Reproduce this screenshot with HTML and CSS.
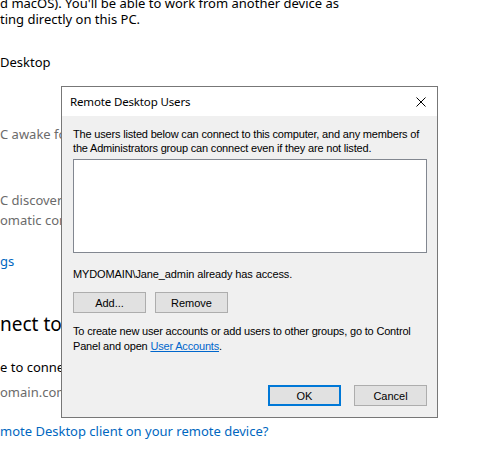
FILE: index.html
```html
<!DOCTYPE html>
<html>
<head>
<meta charset="utf-8">
<link rel="stylesheet" href="styles.css">
</head>
<body>
<div class="page">
  <p class="txt l1">d macOS). You'll be able to work from another device as</p>
  <p class="txt l2">ting directly on this PC.</p>
  <p class="txt l3">Desktop</p>
  <p class="txt gray l4">C awake for connections when it is plugged in</p>
  <p class="txt gray l5">C discoverable on private networks to enable</p>
  <p class="txt gray l6">omatic connection from a remote device</p>
  <p class="txt link l7">gs</p>
  <p class="heading l8">nect to this PC</p>
  <p class="txt l9">e to connect from your remote device:</p>
  <p class="txt gray l10">omain.com</p>
  <p class="txt link l11">mote Desktop client on your remote device?</p>
</div>

<div class="dialog">
  <div class="titlebar">
    <span class="title">Remote Desktop Users</span>
    <svg class="close" width="10" height="10" viewBox="0 0 10 10"><path d="M0.5 0.5 L9.5 9.5 M9.5 0.5 L0.5 9.5" stroke="#000" stroke-width="1" fill="none"/></svg>
  </div>
  <div class="body">
    <p class="dtext">The users listed below can connect to this computer, and any members of<br>the Administrators group can connect even if they are not listed.</p>
    <div class="listbox"></div>
    <p class="dtext access">MYDOMAIN\Jane_admin already has access.</p>
    <div class="btnrow">
      <button class="btn">Add...</button>
      <button class="btn">Remove</button>
    </div>
    <p class="dtext info">To create new user accounts or add users to other groups, go to Control<br>Panel and open <a class="ua">User Accounts</a>.</p>
    <div class="footer">
      <button class="btn primary">OK</button>
      <button class="btn">Cancel</button>
    </div>
  </div>
</div>
</body>
</html>
```

FILE: styles.css
```css
html, body {
  margin: 0;
  padding: 0;
  background: #ffffff;
  width: 490px;
  height: 476px;
  overflow: hidden;
}

.page {
  display: flex;
  flex-direction: column;
  font-family: "Noto Sans", sans-serif;
  font-size: 13px;
  color: #000;
}

.page p {
  margin: 0;
  white-space: nowrap;
  line-height: 20px;
}

.gray { color: #6b6b6b; }
.link { color: #0067c0; }

.l1 { margin-top: -7px !important; }
.l2 { margin-top: -4px !important; }
.l3 { margin-top: 23px !important; }
.l4 { margin-top: 52px !important; }
.l5 { margin-top: 46px !important; }
.l6 { margin-top: 0px !important; }
.l7 { margin-top: 21px !important; }
.heading {
  font-size: 19px;
  line-height: 28px !important;
  margin-top: 39px !important;
}
.l9 { margin-top: 19px !important; }
.l10 { margin-top: 5px !important; }
.l11 { margin-top: 19px !important; }

.dialog {
  position: absolute;
  left: 61px;
  top: 86px;
  width: 375px;
  height: 330px;
  border: 1px solid #777777;
  background: #f0f0f0;
  display: flex;
  flex-direction: column;
}

.titlebar {
  height: 29px;
  background: #ffffff;
  display: flex;
  align-items: center;
  justify-content: space-between;
  padding: 0 11px 0 8px;
  flex-shrink: 0;
}

.title {
  font-family: "Noto Sans", sans-serif;
  font-size: 11.5px;
  letter-spacing: -0.15px;
  color: #000;
}

.close { display: block; }

.body {
  flex: 1;
  display: flex;
  flex-direction: column;
  padding: 11px 10px 11px 11px;
  font-family: "Liberation Sans", Arial, sans-serif;
  font-size: 11px;
  letter-spacing: -0.18px;
  color: #000;
}

.dtext {
  margin: 0;
  line-height: 14px;
  white-space: nowrap;
}

.listbox {
  margin-top: 4px;
  height: 92px;
  background: #ffffff;
  border: 1px solid #828790;
}

.access { margin-top: 14px; letter-spacing: -0.12px; }

.btnrow {
  display: flex;
  gap: 9px;
  margin-top: 11px;
}

.btn {
  width: 73px;
  height: 21px;
  box-sizing: border-box;
  border: 1px solid #adadad;
  background: #e1e1e1;
  font-family: "Liberation Sans", Arial, sans-serif;
  font-size: 11px;
  color: #000;
  padding: 0;
  margin: 0;
}

.btn.primary {
  border: 2px solid #0078d7;
}

.info { margin-top: 11px; line-height: 15px; }

.ua {
  color: #0066cc;
  text-decoration: underline;
}

.footer {
  margin-top: auto;
  display: flex;
  justify-content: flex-end;
  gap: 13px;
}
```
